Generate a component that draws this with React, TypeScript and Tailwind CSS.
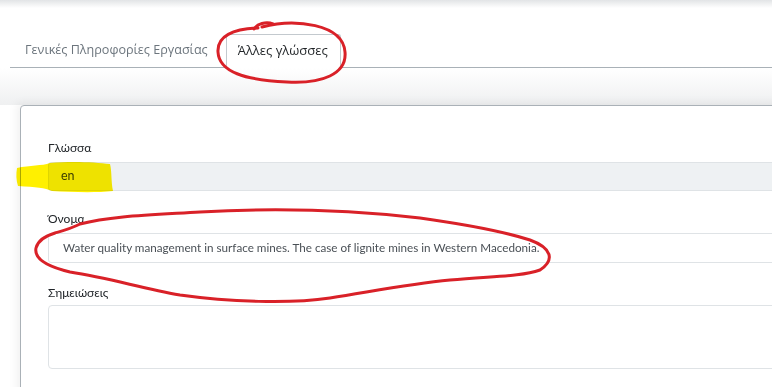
import React from 'react';

// Red pen marks and yellow highlighter drawn on top of the form
function Annotations() {
  return (
    <svg className="absolute inset-0 pointer-events-none" width="772" height="387" viewBox="0 0 772 387">
      <g className="mix-blend-multiply">
        <path
          d="M17 168 C30 165 42 166 50 163 C70 161 95 162 110 164 C112 172 111 182 113 191 C95 193 70 192 52 191 C45 188 36 187 18 186 C16 180 16 174 17 168 Z"
          fill="#fff000"
        />
      </g>
      <g fill="none" stroke="#d92128" strokeWidth="3" strokeLinecap="round" strokeLinejoin="round">
        <path d="M262 27 C295 18 343 24 345 52 C347 74 322 84 287 82 C245 80 219 72 218 52 C217 36 233 29 258 28" />
        <path d="M254 29 C257 24 266 21 273 24" />
        <path d="M80 224 C110 216 150 215 200 212 C270 208 350 210 420 218 C470 225 505 232 530 240 C552 248 555 260 540 270 C520 277 490 276 450 280 C410 284 380 290 330 298 C290 304 230 302 180 295 C140 288 110 278 70 272 C45 266 34 258 36 248 C38 240 45 236 55 233 C62 231 70 229 80 224 Z" />
      </g>
    </svg>
  );
}

export default function App() {
  return (
    <div className="relative w-[772px] h-[387px] overflow-hidden bg-white font-['Open_Sans',sans-serif]">
      {/* Top shadow band */}
      <div className="h-[8px] bg-gradient-to-b from-[#e2e4e6] to-white" />

      {/* Tabs */}
      <div className="ml-[10px] mt-[26px] flex items-end border-b border-[#a9b1b7] text-[12.6px]">
        <div className="px-[15px] h-[33px] flex items-center text-[#6c757d]">Γενικές Πληροφορίες Εργασίας</div>
        <div className="ml-[3px] px-[11px] w-[115px] h-[34px] -mb-px flex items-center bg-white border border-[#c3c9ce] border-b-white rounded-t-[3px] text-[13px] text-[#1f2326]">
          Άλλες γλώσσες
        </div>
      </div>

      {/* Card */}
      <div className="bg-gradient-to-b from-white to-[#eff0f1] h-[37px]" />
      <div className="ml-[20px] w-[820px] h-[300px] bg-white border border-[#aab1b7] rounded-[4px] shadow-[-3px_-2px_10px_rgba(0,0,0,0.06)] pt-[32px] pl-[27px] text-[12px] font-['Lato',sans-serif]">
        <div className="flex flex-col">
          <label className="leading-[20px] text-[#212529] mb-[4px]">Γλώσσα</label>
          <div className="h-[29px] flex items-center pl-[12px] bg-[#eef1f3] border border-[#dfe3e6] rounded-[3px] text-[12.5px] text-[#3d4248]">
            en
          </div>

          <label className="leading-[20px] text-[#212529] mt-[18px] mb-[4px]">Όνομα</label>
          <div className="h-[30px] flex items-center pl-[14px] bg-white border border-[#dfe3e6] rounded-[3px] text-[11.7px] text-[#4a5056]">
            Water quality management in surface mines. The case of lignite mines in Western Macedonia.
          </div>

          <label className="leading-[20px] text-[#212529] mt-[20px] mb-[2px]">Σημειώσεις</label>
          <div className="h-[64px] bg-white border border-[#dfe3e6] rounded-[4px]" />
        </div>
      </div>

      <Annotations />
    </div>
  );
}
